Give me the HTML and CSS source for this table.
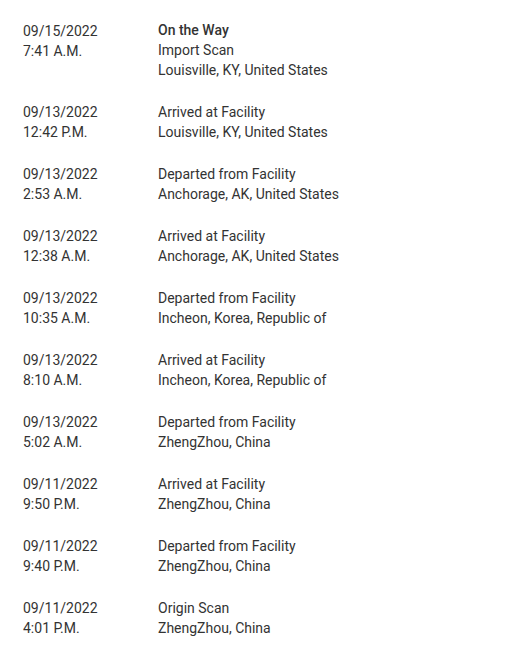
FILE: index.html
```html
<!DOCTYPE html>
<html>
<head>
<meta charset="utf-8">
<link rel="stylesheet" href="styles.css">
</head>
<body>
<div class="timeline">
  <div class="row">
    <div class="when"><div>09/15/2022</div><div>7:41 A.M.</div></div>
    <div class="what"><div class="status">On the Way</div><div>Import Scan</div><div>Louisville, KY, United States</div></div>
  </div>
  <div class="row">
    <div class="when"><div>09/13/2022</div><div>12:42 P.M.</div></div>
    <div class="what"><div>Arrived at Facility</div><div>Louisville, KY, United States</div></div>
  </div>
  <div class="row">
    <div class="when"><div>09/13/2022</div><div>2:53 A.M.</div></div>
    <div class="what"><div>Departed from Facility</div><div>Anchorage, AK, United States</div></div>
  </div>
  <div class="row">
    <div class="when"><div>09/13/2022</div><div>12:38 A.M.</div></div>
    <div class="what"><div>Arrived at Facility</div><div>Anchorage, AK, United States</div></div>
  </div>
  <div class="row">
    <div class="when"><div>09/13/2022</div><div>10:35 A.M.</div></div>
    <div class="what"><div>Departed from Facility</div><div>Incheon, Korea, Republic of</div></div>
  </div>
  <div class="row">
    <div class="when"><div>09/13/2022</div><div>8:10 A.M.</div></div>
    <div class="what"><div>Arrived at Facility</div><div>Incheon, Korea, Republic of</div></div>
  </div>
  <div class="row">
    <div class="when"><div>09/13/2022</div><div>5:02 A.M.</div></div>
    <div class="what"><div>Departed from Facility</div><div>ZhengZhou, China</div></div>
  </div>
  <div class="row">
    <div class="when"><div>09/11/2022</div><div>9:50 P.M.</div></div>
    <div class="what"><div>Arrived at Facility</div><div>ZhengZhou, China</div></div>
  </div>
  <div class="row">
    <div class="when"><div>09/11/2022</div><div>9:40 P.M.</div></div>
    <div class="what"><div>Departed from Facility</div><div>ZhengZhou, China</div></div>
  </div>
  <div class="row">
    <div class="when"><div>09/11/2022</div><div>4:01 P.M.</div></div>
    <div class="what"><div>Origin Scan</div><div>ZhengZhou, China</div></div>
  </div>
</div>
</body>
</html>
```
FILE: styles.css
```css
html, body {
  margin: 0;
  padding: 0;
  background: #ffffff;
}
body {
  font-family: Roboto, "Liberation Sans", sans-serif;
  font-size: 14px;
  line-height: 20px;
  color: #333333;
}
.timeline {
  display: flex;
  flex-direction: column;
  gap: 22px;
  padding: 21px 0 0 23px;
}
.row {
  display: grid;
  grid-template-columns: 135px 1fr;
}
.status {
  font-weight: 500;
  line-height: 19px;
}
```
